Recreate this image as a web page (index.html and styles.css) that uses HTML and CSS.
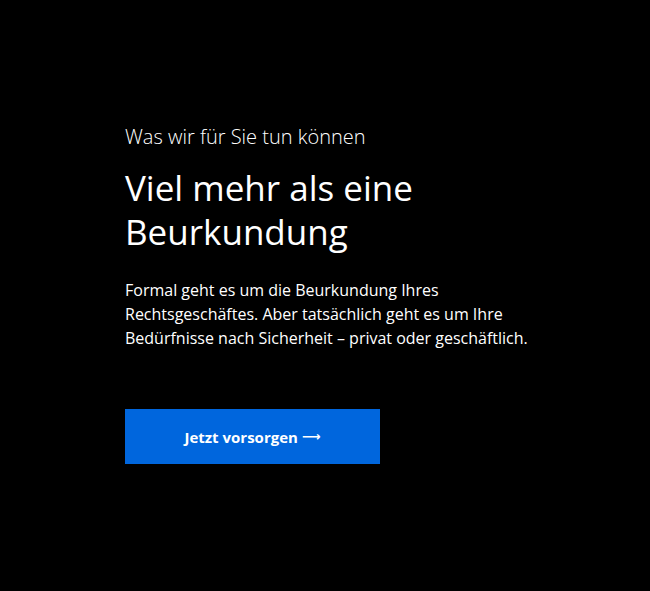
FILE: index.html
```html
<!DOCTYPE html>
<html lang="de">
<head>
<meta charset="utf-8">
<link rel="stylesheet" href="styles.css">
</head>
<body>
<section class="hero">
  <div class="content">
    <p class="eyebrow">Was wir für Sie tun können</p>
    <h1 class="title">Viel mehr als eine Beurkundung</h1>
    <p class="text">Formal geht es um die Beurkundung Ihres Rechtsgeschäftes. Aber tatsächlich geht es um Ihre Bedürfnisse nach Sicherheit – privat oder geschäftlich.</p>
    <a class="button" href="#">Jetzt vorsorgen <span class="arrow">⟶</span></a>
  </div>
</section>
</body>
</html>
```
FILE: styles.css
```css
html, body {
  margin: 0;
  padding: 0;
  background: #000;
  color: #fff;
}
.hero {
  width: 650px;
  height: 591px;
  box-sizing: border-box;
  padding: 124px 0 0 125px;
}
.content {
  width: 420px;
  display: flex;
  flex-direction: column;
  align-items: flex-start;
}
.eyebrow {
  margin: 0;
  font-family: "Open Sans", sans-serif;
  font-weight: 300;
  font-size: 20px;
  line-height: 26px;
}
.title {
  margin: 16px 0 0;
  font-family: "Open Sans", sans-serif;
  font-weight: 400;
  font-size: 35px;
  line-height: 44px;
  width: 330px;
}
.text {
  margin: 24px 0 0;
  font-family: "Open Sans", sans-serif;
  font-size: 16px;
  line-height: 24px;
}
.button {
  margin-top: 59px;
  width: 255px;
  height: 55px;
  display: flex;
  align-items: center;
  justify-content: center;
  gap: 4px;
  background: #0066dd;
  color: #fff;
  text-decoration: none;
  font-family: "Open Sans", sans-serif;
  font-weight: 700;
  font-size: 15px;
}
.arrow {
  font-family: "DejaVu Sans", sans-serif;
  font-weight: 700;
  font-size: 13px;
}
```
